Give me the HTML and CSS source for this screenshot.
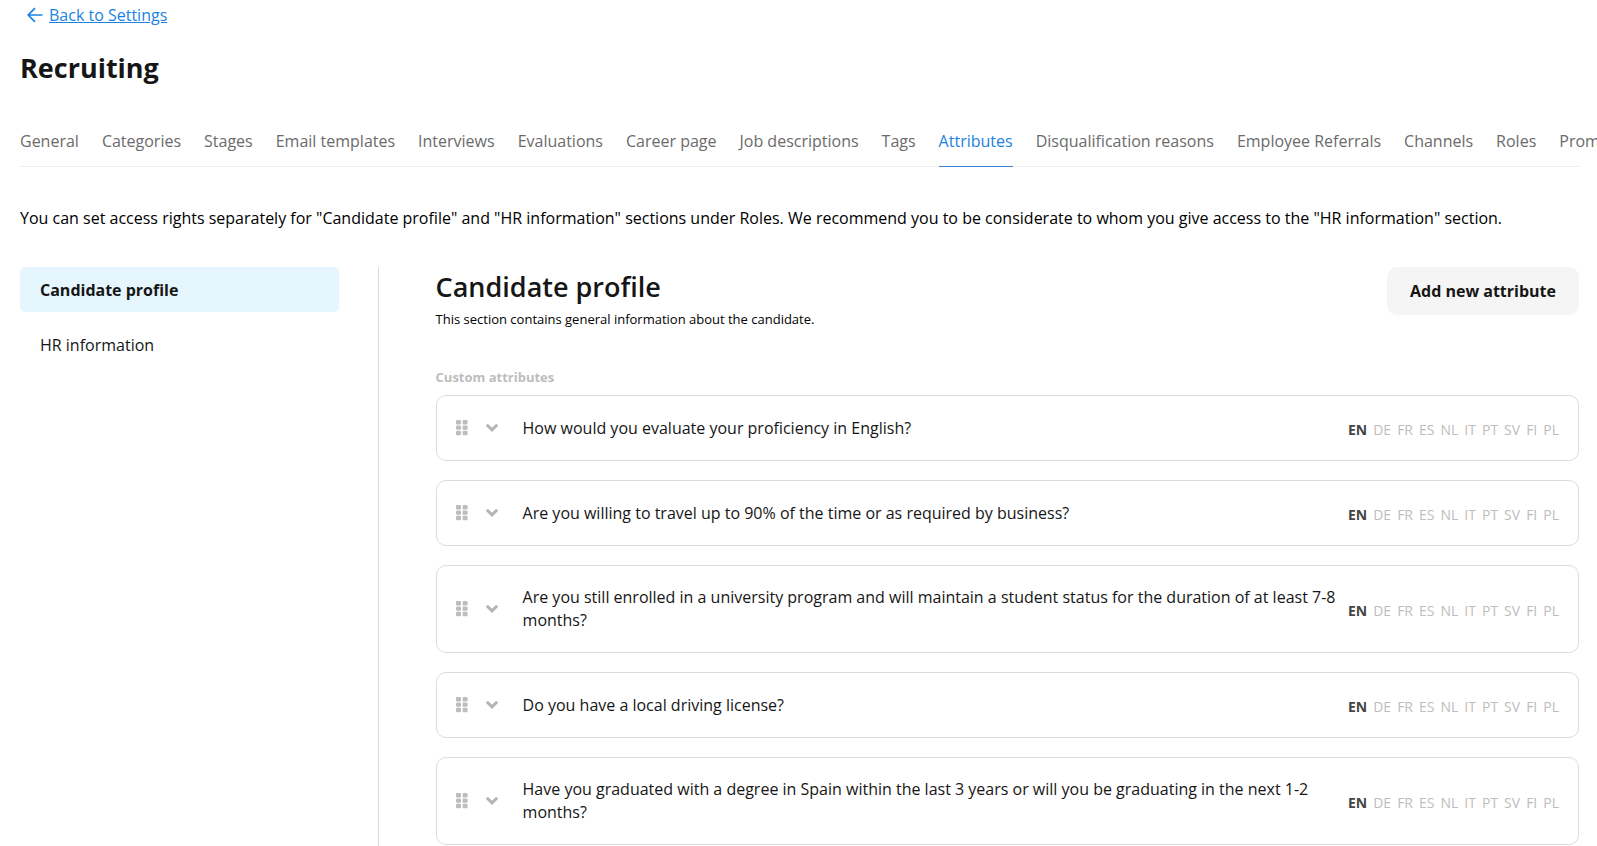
FILE: index.html
```html
<!DOCTYPE html>
<html lang="en">
<head>
    <meta charset="UTF-8" />
    <meta name="viewport" content="width=device-width, initial-scale=1.0"/>
    <title>Recruiting - Attributes</title>
    <link rel="stylesheet" href="styles.css">
</head>
<body>
    <!-- Shared icons -->
    <svg class="sprite" aria-hidden="true">
        <symbol id="icon-drag" viewBox="0 0 12 16">
            <rect x="0" y="0" width="5" height="4.4" rx="1.2" />
            <rect x="6.6" y="0" width="5" height="4.4" rx="1.2" />
            <rect x="0" y="5.4" width="5" height="4.4" rx="1.2" />
            <rect x="6.6" y="5.4" width="5" height="4.4" rx="1.2" />
            <rect x="0" y="10.8" width="5" height="4.4" rx="1.2" />
            <rect x="6.6" y="10.8" width="5" height="4.4" rx="1.2" />
        </symbol>
        <symbol id="icon-chevron" viewBox="0 0 14 10">
            <path d="M1.8 1.8 L7 6.9 L12.2 1.8" fill="none" stroke="currentColor" stroke-width="3" />
        </symbol>
    </svg>

    <header class="page-header">
        <a href="#" class="back-link">
            <svg class="back-arrow" viewBox="0 0 16 16" aria-hidden="true">
                <path d="M15.5 8 H1.5 M8 1.2 L1.2 8 L8 14.8" fill="none" stroke="currentColor" stroke-width="1.7" />
            </svg>
            <span>Back to Settings</span>
        </a>
        <h1>Recruiting</h1>
        <nav class="tabs">
            <a href="#">General</a>
            <a href="#">Categories</a>
            <a href="#">Stages</a>
            <a href="#">Email templates</a>
            <a href="#">Interviews</a>
            <a href="#">Evaluations</a>
            <a href="#">Career page</a>
            <a href="#">Job descriptions</a>
            <a href="#">Tags</a>
            <a href="#" class="active">Attributes</a>
            <a href="#">Disqualification reasons</a>
            <a href="#">Employee Referrals</a>
            <a href="#">Channels</a>
            <a href="#">Roles</a>
            <a href="#">Promotion</a>
        </nav>
    </header>

    <p class="intro">You can set access rights separately for "Candidate profile" and "HR information" sections under Roles. We recommend you to be considerate to whom you give access to the "HR information" section.</p>

    <div class="layout">
        <aside class="sidebar">
            <a href="#" class="active">Candidate profile</a>
            <a href="#">HR information</a>
        </aside>

        <main class="content">
            <div class="content-header">
                <div>
                    <h2>Candidate profile</h2>
                    <p>This section contains general information about the candidate.</p>
                </div>
                <button type="button" class="add-button">Add new attribute</button>
            </div>

            <h3>Custom attributes</h3>
            <ul class="attributes">
                <li class="attribute">
                    <svg class="drag" aria-hidden="true"><use href="#icon-drag" /></svg>
                    <button type="button" class="toggle" aria-label="Expand"><svg><use href="#icon-chevron" /></svg></button>
                    <span class="question">How would you evaluate your proficiency in English?</span>
                    <span class="languages"><b>EN</b> <span>DE</span> <span>FR</span> <span>ES</span> <span>NL</span> <span>IT</span> <span>PT</span> <span>SV</span> <span>FI</span> <span>PL</span></span>
                </li>
                <li class="attribute">
                    <svg class="drag" aria-hidden="true"><use href="#icon-drag" /></svg>
                    <button type="button" class="toggle" aria-label="Expand"><svg><use href="#icon-chevron" /></svg></button>
                    <span class="question">Are you willing to travel up to 90% of the time or as required by business?</span>
                    <span class="languages"><b>EN</b> <span>DE</span> <span>FR</span> <span>ES</span> <span>NL</span> <span>IT</span> <span>PT</span> <span>SV</span> <span>FI</span> <span>PL</span></span>
                </li>
                <li class="attribute">
                    <svg class="drag" aria-hidden="true"><use href="#icon-drag" /></svg>
                    <button type="button" class="toggle" aria-label="Expand"><svg><use href="#icon-chevron" /></svg></button>
                    <span class="question">Are you still enrolled in a university program and will maintain a student status for the duration of at least 7-8 months?</span>
                    <span class="languages"><b>EN</b> <span>DE</span> <span>FR</span> <span>ES</span> <span>NL</span> <span>IT</span> <span>PT</span> <span>SV</span> <span>FI</span> <span>PL</span></span>
                </li>
                <li class="attribute">
                    <svg class="drag" aria-hidden="true"><use href="#icon-drag" /></svg>
                    <button type="button" class="toggle" aria-label="Expand"><svg><use href="#icon-chevron" /></svg></button>
                    <span class="question">Do you have a local driving license?</span>
                    <span class="languages"><b>EN</b> <span>DE</span> <span>FR</span> <span>ES</span> <span>NL</span> <span>IT</span> <span>PT</span> <span>SV</span> <span>FI</span> <span>PL</span></span>
                </li>
                <li class="attribute">
                    <svg class="drag" aria-hidden="true"><use href="#icon-drag" /></svg>
                    <button type="button" class="toggle" aria-label="Expand"><svg><use href="#icon-chevron" /></svg></button>
                    <span class="question">Have you graduated with a degree in Spain within the last 3 years or will you be graduating in the next 1-2 months?</span>
                    <span class="languages"><b>EN</b> <span>DE</span> <span>FR</span> <span>ES</span> <span>NL</span> <span>IT</span> <span>PT</span> <span>SV</span> <span>FI</span> <span>PL</span></span>
                </li>
            </ul>
        </main>
    </div>
</body>
</html>
```
FILE: styles.css
```css
* {
    margin: 0;
    padding: 0;
    box-sizing: border-box;
}

body {
    display: flex;
    flex-direction: column;
    min-height: 100vh;
    padding: 0 18px 0 20px;
    overflow-x: hidden;
    font-family: 'Open Sans', 'Noto Sans', sans-serif;
    font-size: 16px;
    line-height: 24px;
    color: #161616;
    background-color: #fff;
}

a {
    color: inherit;
    text-decoration: none;
}

button {
    border: none;
    font: inherit;
    color: inherit;
    cursor: pointer;
}

.sprite {
    position: absolute;
    width: 0;
    height: 0;
}

/* Header */
.back-link {
    display: inline-flex;
    align-items: center;
    gap: 6px;
    margin-left: 7px;
    padding-top: 3px;
    color: #1a82e2;
}

.back-link span {
    text-decoration: underline;
}

.back-arrow {
    width: 16px;
    height: 16px;
}

h1 {
    margin-top: 20px;
    font-size: 27px;
    line-height: 38px;
    font-weight: 700;
}

.tabs {
    display: flex;
    gap: 23px;
    margin-top: 42px;
    border-bottom: 1px solid #ececec;
    color: #6b6b6b;
    white-space: nowrap;
}

.tabs a {
    margin-bottom: -1px;
    padding-bottom: 13px;
    border-bottom: 1px solid transparent;
}

.tabs a.active {
    color: #1a82e2;
    border-bottom-color: #3b82d6;
}

.intro {
    margin-top: 39px;
    color: #000;
}

/* Two columns */
.layout {
    display: flex;
    flex: 1;
    margin-top: 37px;
}

.sidebar {
    display: flex;
    flex-direction: column;
    gap: 10px;
    width: 23%;
    padding-right: 39px;
    border-right: 1px solid #d9d9d9;
}

.sidebar a {
    padding: 11px 20px 10px;
    border-radius: 5px;
}

.sidebar a.active {
    background-color: #e5f6fe;
    font-weight: 700;
}

.content {
    flex: 1;
    padding-left: 57px;
}

.content-header {
    display: flex;
    justify-content: space-between;
    align-items: flex-start;
}

h2 {
    font-size: 27px;
    line-height: 40px;
    font-weight: 600;
}

.content-header p {
    font-size: 13px;
    line-height: 24px;
    color: #000;
}

.add-button {
    height: 48px;
    padding: 0 23px;
    border-radius: 10px;
    background-color: #f5f5f5;
    font-weight: 700;
}

h3 {
    margin-top: 36px;
    font-size: 13px;
    line-height: 20px;
    font-weight: 700;
    color: #bdbdbd;
}

/* Attribute cards */
.attributes {
    display: flex;
    flex-direction: column;
    gap: 19px;
    margin-top: 8px;
    list-style: none;
}

.attribute {
    display: flex;
    align-items: center;
    padding: 20px 19px;
    border: 1px solid #dcdcdc;
    border-radius: 10px;
}

.drag {
    flex: none;
    width: 12px;
    height: 16px;
    fill: #bdbdbd;
}

.toggle {
    display: flex;
    flex: none;
    margin: 0 24px 0 17px;
    background: none;
    color: #b5b5b5;
}

.toggle svg {
    width: 14px;
    height: 10px;
}

.question {
    flex: 1;
    line-height: 23px;
}

.languages {
    display: flex;
    flex: none;
    gap: 6px;
    padding-top: 4px;
    margin-left: 8px;
    font-size: 14px;
    line-height: 20px;
    color: #bdbdbd;
}

.languages b {
    color: #444;
}
```
